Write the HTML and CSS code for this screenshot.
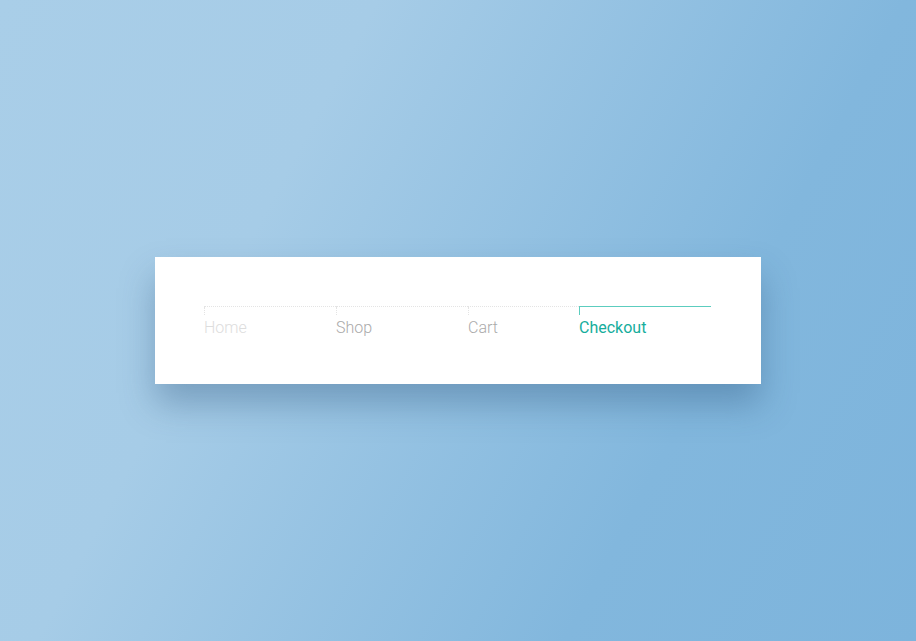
FILE: index.html
```html
<!DOCTYPE html>
<html lang="en">
<head>
<meta charset="utf-8">
<title>Breadcrumb</title>
<link rel="stylesheet" href="styles.css">
</head>
<body>
<main class="stage">
  <nav class="card">
    <ol class="steps">
      <li class="step step-home">Home</li>
      <li class="step step-shop">Shop</li>
      <li class="step step-cart">Cart</li>
      <li class="step step-active">Checkout</li>
    </ol>
  </nav>
</main>
</body>
</html>
```
FILE: styles.css
```css
* { box-sizing: border-box; }
html, body { margin: 0; padding: 0; height: 100%; }
body {
  font-family: Roboto, "Liberation Sans", sans-serif;
  background: linear-gradient(118deg, #a9cee8 0%, #a6cce7 30%, #82b7dd 72%, #7db4dc 100%);
  overflow: hidden;
}
.stage {
  height: 641px;
  display: flex;
  justify-content: center;
  padding-top: 257px;
}
.card {
  width: 606px;
  height: 127px;
  background: #fff;
  padding: 49px 50px 0 49px;
  box-shadow: 0 20px 32px rgba(40, 80, 120, 0.35);
  align-self: flex-start;
}
.steps {
  list-style: none;
  margin: 0;
  padding: 0;
  display: flex;
}
.step {
  position: relative;
  width: 132px;
  font-size: 16px;
  font-weight: 300;
  line-height: 19px;
  padding-top: 11px;
  border-top: 1px dotted #e4e4e4;
  color: #aaa;
}
.step::before {
  content: "";
  position: absolute;
  left: 0;
  top: 0;
  height: 8px;
  border-left: 1px dotted #e4e4e4;
}
.step-home { color: #dddddd; }
.step-cart { width: 111px; }
.step-active {
  color: #16ad9c;
  font-weight: 400;
  border-top: 1px solid #5ccdbf;
}
.step-active::before {
  border-left: 1px solid #5ccdbf;
}
```
